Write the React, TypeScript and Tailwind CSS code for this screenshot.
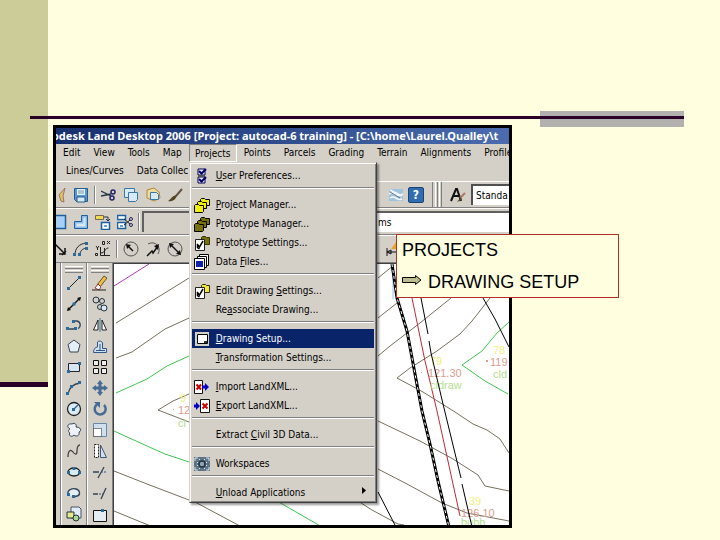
import type { ReactNode } from 'react';

interface MenuEntry {
  before?: string;
  accel: string;
  after: string;
  icon?: ReactNode;
  active?: boolean;
  submenu?: boolean;
}

function Icon({ children }: { children: ReactNode }) {
  return (
    <svg viewBox="0 0 16 16" className="h-4 w-4 shrink-0" fill="none" aria-hidden="true">
      {children}
    </svg>
  );
}

function Folders({ fill }: { fill: string }) {
  return (
    <Icon>
      <g fill={fill} stroke="#000">
        <path d="M6.500 2.500l1-1h3l1 1h4v6h-9z" />
        <path d="M3.500 5.500l1-1h3l1 1h4v6h-9z" />
        <path d="M.5 8.500l1-1h3l1 1h4v6l-1 1h-8z" />
      </g>
    </Icon>
  );
}

function CheckFolder({ fill }: { fill: string }) {
  return (
    <Icon>
      <path d="M7.500 2.500l1-1h3l1 1h3v7h-8z" fill={fill} stroke="#333300" />
      <path d="M1.500 4.500h9v11h-9z" fill="#fff" stroke="#222" />
      <path d="M3 9l2.500 3L9 6M3.500 9.500v3l2 1.500" stroke="#000" strokeWidth="1.500" />
    </Icon>
  );
}

function LandXml({ out }: { out?: boolean }) {
  return (
    <Icon>
      <path d={out ? 'M6.500 1.500h9v13h-9z' : 'M.5 1.500h8v13h-8z'} fill="#fff" stroke="#111" />
      <path d={out ? 'M8.500 5.500l5 5m0-5l-5 5' : 'M2.500 5.500l4.500 5m0-5l-4.500 5'} stroke="#c00" strokeWidth="2" />
      <path d={out ? 'M0 6.500h2V4l4 4-4 4V9.500H0z' : 'M8 6.500h3V4l4 4-4 4V9.500H8z'} fill="#0000c8" />
    </Icon>
  );
}

const menuGroups: MenuEntry[][] = [
  [
    {
      accel: 'U',
      after: 'ser Preferences...',
      icon: (
        <Icon>
          <path d="M4 1h7v6H4zM4 9h7v6H4z" fill="#eef" stroke="#000050" />
          <path d="M4 8h7" stroke="#555" strokeWidth="2" />
          <path d="M5 3l2.500 2.500L12 1M5 11l2.500 2.500L12 9" stroke="#000060" strokeWidth="2" />
        </Icon>
      ),
    },
  ],
  [
    { accel: 'P', after: 'roject Manager...', icon: <Folders fill="#f4ee10" /> },
    { before: 'P', accel: 'r', after: 'ototype Manager...', icon: <Folders fill="#77700c" /> },
    { before: 'Pr', accel: 'o', after: 'totype Settings...', icon: <CheckFolder fill="#77700c" /> },
    {
      before: 'Data ',
      accel: 'F',
      after: 'iles...',
      icon: (
        <Icon>
          <path d="M5.500.5h9v11h-9z" fill="#fff" stroke="#000" />
          <path d="M3.500 2.500h9v11h-9z" fill="#fff" stroke="#000" />
          <path d="M.5 4.500h10v11H.5z" fill="#fff" stroke="#000" />
          <path d="M2 7h7v6H2z" fill="#1020b0" />
        </Icon>
      ),
    },
  ],
  [
    { before: 'Edit Drawing ', accel: 'S', after: 'ettings...', icon: <CheckFolder fill="#f4e640" /> },
    { before: 'Re', accel: 'a', after: 'ssociate Drawing...' },
  ],
  [
    {
      accel: 'D',
      after: 'rawing Setup...',
      active: true,
      icon: (
        <Icon>
          <path d="M1 1h14v14H1z" fill="#d4d0c8" />
          <path d="M3.500 3.500h10v9h-10z" fill="#fff" stroke="#000" />
          <path d="M10 12v-2h3v2z" fill="#333" />
        </Icon>
      ),
    },
    { accel: 'T', after: 'ransformation Settings...' },
  ],
  [
    { accel: 'I', after: 'mport LandXML...', icon: <LandXml /> },
    { accel: 'E', after: 'xport LandXML...', icon: <LandXml out /> },
  ],
  [{ before: 'Extract ', accel: 'C', after: 'ivil 3D Data...' }],
  [
    {
      accel: '',
      after: 'Workspaces',
      icon: (
        <Icon>
          <path d="M0 1h16v14H0z" fill="#5c7488" />
          <circle cx="8" cy="8" r="3" fill="#8fa5b5" stroke="#26323c" strokeWidth="1.500" />
          <path d="M1 5V2h3M12 2h3v3M1 11v3h3M12 14h3v-3M5 3l1 1M11 3l-1 1M3 6l1 1M13 6l-1 1M5 13l1-1M11 13l-1-1M3 10l1-1M13 10l-1-1" stroke="#dfe7ec" />
        </Icon>
      ),
    },
  ],
  [{ accel: 'U', after: 'nload Applications', submenu: true }],
];

const menusBefore = ['Edit', 'View', 'Tools', 'Map'];
const menusAfter = ['Points', 'Parcels', 'Grading', 'Terrain', 'Alignments', 'Profile'];

const BLUE = '#2c6c9c';

const drawTools: [string, ReactNode][] = [
  ['Line', <><path d="M3 13L13 3" stroke="#222" /><path d="M1 12h3v3H1zM12 1h3v3h-3z" fill={BLUE} /></>],
  ['Construction line', <><path d="M2 14L14 2" stroke="#111" strokeWidth="1.500" /><path d="M1 15l1-4 3 3zM15 1l-4 1 3 3z" fill="#111" /><path d="M6.500 6.500h3v3h-3z" fill={BLUE} /></>],
  ['Polyline', <><path d="M2 12h8M7 4h4a4 4 0 011 7.500" stroke="#345" strokeWidth="1.300" /><path d="M0 10h3v3H0zM8 10h3v3H8zM6 3h3v3H6z" fill={BLUE} /></>],
  ['Polygon', <path d="M8 2l6 4.500-2 7.500H4L2 6.500z" fill="#e4eef6" stroke="#345" />],
  ['Rectangle', <><path d="M2.500 4.500h11v8h-11z" fill="#d8e6f4" stroke="#223" /><path d="M1 11h3v3H1zM12 3h3v3h-3z" fill={BLUE} /></>],
  ['Arc', <><path d="M2 14C3 8 7 4 14 3" stroke="#345" strokeWidth="1.300" /><path d="M0 12h3v3H0zM4 5h3v3H4zM12 1h3v3h-3z" fill={BLUE} /></>],
  ['Circle', <><circle cx="8" cy="8" r="6.500" fill="#dcecf6" stroke="#222" strokeWidth="1.300" /><path d="M7 9l5-5" stroke={BLUE} strokeWidth="1.500" /><path d="M6 7h3v3H6z" fill={BLUE} /></>],
  ['Revision cloud', <path d="M4 7C0 5 2 1 6 2c3-2 5 1 4 3 5 0 6 4 3 5 1 4-3 5-5 3-3 3-6 0-4-2-2-1-2-3 0-4z" fill="#eef2f6" stroke="#345" />],
  ['Spline', <path d="M2 14c0-7 3-8 5-5s4 3 4-1 1-6 3-6" stroke="#444" strokeWidth="1.300" />],
  ['Ellipse', <><ellipse cx="8" cy="8" rx="6" ry="4" fill="#d8ecf4" stroke="#222" strokeWidth="1.300" /><path d="M1 7h3v3H1zM12 7h3v3h-3zM6.500 3h3v3h-3z" fill={BLUE} /></>],
  ['Ellipse arc', <><path d="M2 9c-1-4 4-6 8-5s5 6 1 7l-4 1" fill="#e4eef4" stroke="#345" strokeWidth="1.300" /><path d="M1 8h3v3H1zM6 10h3v3H6z" fill={BLUE} /></>],
  ['Insert block', <><path d="M5 1h8l2 2v9H5z" fill="#e0ecf8" stroke="#456" /><path d="M1 6h7v6H1z" fill="#e4e890" stroke="#233" /><circle cx="10" cy="12" r="3" fill="#a8d898" stroke="#233" /></>],
];

const modifyTools: [string, ReactNode][] = [
  ['Erase', <><path d="M5 10L12 1l3 2-7 9z" fill="#f0c040" stroke="#653" /><path d="M3 13l3-4 3 3-2 3z" fill="#fff" stroke="#a33" /><path d="M0 15h14" stroke="#222" /></>],
  ['Copy', <><circle cx="4" cy="4" r="3" stroke="#234" /><circle cx="10" cy="5" r="2.500" stroke="#234" /><circle cx="8" cy="11" r="2.500" stroke="#234" /><circle cx="12" cy="12" r="3" fill="#d8e8f4" stroke="#234" /></>],
  ['Mirror', <><path d="M6 3v10H1.500zM10 3v10h4.500z" fill="#fff" stroke="#222" /><path d="M8 1v14" stroke="#3478b0" /></>],
  ['Offset', <><path d="M1.500 14.500h13v-4h-4V5a3 3 0 00-5-1v5c-2 0-4 2-4 5.500z" fill="#cfe2f0" stroke="#358" /><path d="M4 12.500h9M8 12V6" stroke="#358" /></>],
  ['Array', <path d="M1.500 1.500h5v5h-5zM9.500 1.500h5v5h-5zM1.500 9.500h5v5h-5zM9.500 9.500h5v5h-5z" fill="#eee" stroke="#111" />],
  ['Move', <path d="M8 0l3 4H9.500v2.500H12V5l4 3-4 3V9.500H9.500V12H11l-3 4-3-4h1.500V9.500H4V11L0 8l4-3v1.500h2.500V4H5z" fill="#466c94" />],
  ['Rotate', <><path d="M5 3.500A5.500 5.500 0 1012 4" stroke="#466c94" strokeWidth="2.500" /><path d="M2 1h6v6z" fill="#466c94" /></>],
  ['Scale', <><path d="M1.500 1.500h13v13h-13z" fill="#cfe0f0" stroke="#68a" /><path d="M1.500 6.500h8v8h-8z" fill="#fff" stroke="#222" strokeDasharray="1 1" /></>],
  ['Stretch', <><path d="M2.500 1.500h4v13h-4z" fill="#fff" stroke="#222" strokeDasharray="2 1" /><path d="M8.500 2l6 12.500h-6z" fill="#cfe0f0" stroke="#457" /></>],
  ['Trim', <><path d="M1 8h6M12 3L6 14" stroke="#345" strokeWidth="1.300" /><path d="M9 8h6" stroke="#357" strokeDasharray="2 1" /></>],
  ['Extend', <><path d="M1 9h5M14 3L9 14" stroke="#345" strokeWidth="1.300" /><path d="M7 9h4" stroke="#357" strokeDasharray="2 1" /></>],
  ['Break', <><path d="M1.500 4.500h13v11h-13z" fill="#e4ecf4" stroke="#111" /><path d="M9 3h3v3H9z" fill={BLUE} /></>],
];

function ToolButton({ label, children }: { label: string; children: ReactNode }) {
  return (
    <button type="button" aria-label={label} className="flex h-5 w-[22px] shrink-0 items-center justify-center">
      <Icon>{children}</Icon>
    </button>
  );
}

function Divider() {
  return (
    <span className="flex h-[18px] w-[6px] shrink-0 justify-center">
      <span className="w-[2px] border-l border-[#808080] bg-white" />
    </span>
  );
}

function Palette({ tools }: { tools: [string, ReactNode][] }) {
  return (
    <div className="flex w-[26px] shrink-0 flex-col border-r border-l border-r-[#808080] border-l-white pt-[3px]">
      <Grip />
      <div className="grid flex-1 auto-rows-fr justify-center">
        {tools.map(([label, art]) => (
          <ToolButton key={label} label={label}>
            {art}
          </ToolButton>
        ))}
      </div>
    </div>
  );
}

function Grip() {
  return (
    <div className="mx-[3px] flex h-[7px] shrink-0 flex-col justify-between">
      <span className="h-[3px] border-t border-b border-t-white border-b-[#808080]" />
      <span className="h-[3px] border-t border-b border-t-white border-b-[#808080]" />
    </div>
  );
}

function ProjectsMenu() {
  return (
    <div
      role="menu"
      className="absolute top-full left-0 z-10 w-[188px] border border-[#d4d0c8] border-r-[#404040] border-b-[#404040] bg-[#d4d0c8] shadow-[inset_1px_1px_0_#fff,inset_-1px_-1px_0_#808080,2px_2px_2px_rgba(0,0,0,0.4)]"
    >
      <div className="px-[2px] pt-[3px]">
        {menuGroups.map((group, i) => (
          <div key={i}>
            {i > 0 && (
              <div className="h-[10px] pt-[2px]">
                <div className="h-[2px] border-t border-[#808080] bg-white" />
              </div>
            )}
            {group.map((item) => (
              <button
                key={item.after}
                type="button"
                role="menuitem"
                className={`flex h-[19px] w-full items-center gap-[6px] pl-[2px] text-left whitespace-nowrap ${
                  item.active ? 'bg-[#0a246a] text-white' : 'text-black'
                }`}
              >
                <span className="w-4 shrink-0">{item.icon}</span>
                <span className="flex-1">
                  {item.before}
                  <span className="underline">{item.accel}</span>
                  {item.after}
                </span>
                {item.submenu && (
                  <svg viewBox="0 0 4 7" className="mr-2 mb-1 h-[7px] w-1" aria-hidden="true">
                    <path d="M0 0l4 3.500L0 7z" />
                  </svg>
                )}
              </button>
            ))}
          </div>
        ))}
      </div>
    </div>
  );
}

function MenuBar() {
  return (
    <nav className="h-[37px] pl-px leading-[18px] whitespace-nowrap">
      <div className="flex h-[18px] gap-px">
        {menusBefore.map((name) => (
          <button key={name} type="button" className="shrink-0 px-[6px]">
            {name}
          </button>
        ))}
        <div className="relative w-[48px] shrink-0">
          <button
            type="button"
            aria-expanded="true"
            className="h-[18px] w-full border border-t-[#808080] border-r-white border-b-white border-l-[#808080]"
          >
            Projects
          </button>
          <ProjectsMenu />
        </div>
        {menusAfter.map((name) => (
          <button key={name} type="button" className="shrink-0 px-[6px]">
            {name}
          </button>
        ))}
      </div>
      <div className="flex h-[18px] gap-px pl-[3px]">
        <button type="button" className="shrink-0 px-[6px]">Lines/Curves</button>
        <button type="button" className="shrink-0 px-[6px]">Data Collec</button>
      </div>
    </nav>
  );
}

function Toolbars() {
  return (
    <div>
      <div className="flex h-[27px] items-center overflow-hidden border-t border-b border-t-white border-b-[#808080]">
        <div className="-ml-2 flex items-center">
          <ToolButton label="Plot">
            <path d="M14 1L8 8l2 6 3 1-1-6z" fill="#e8c060" stroke="#976" />
          </ToolButton>
          <ToolButton label="Save">
            <path d="M1.500 1.500h13v13h-11l-2-2z" fill="#5c94cc" stroke="#245c94" />
            <path d="M4 2h8v6H4z" fill="#e4f0fa" />
            <path d="M5 4h6M5 6h6" stroke="#79a" />
            <path d="M4 10h8v5H4z" fill="#dce8f0" stroke="#245c94" />
          </ToolButton>
          <Divider />
          <ToolButton label="Cut">
            <path d="M0 4l10 5M0 9l10-2" stroke="#234" strokeWidth="1.300" />
            <circle cx="12" cy="5" r="2" stroke="#226" strokeWidth="1.500" />
            <circle cx="11" cy="11" r="2" stroke="#226" strokeWidth="1.500" />
          </ToolButton>
          <ToolButton label="Copy clip">
            <path d="M1.500 1.500h10v9h-10z" fill="#d8eaf8" stroke="#3878a8" />
            <path d="M5.500 5.500h9v7l-2 2h-7z" fill="#d8eaf8" stroke="#3878a8" />
          </ToolButton>
          <ToolButton label="Paste">
            <path d="M2 3l7-2 5 4 1 6-6 3-7-3z" fill="#ecdca0" stroke="#b08830" />
            <path d="M5.500 5.500h6l2 2v5h-8z" fill="#d8eaf8" stroke="#3878a8" />
          </ToolButton>
          <ToolButton label="Match properties">
            <path d="M15 2L9 9" stroke="#654" strokeWidth="2" />
            <path d="M10 8c-4 0-6 4-9 6 4 1 8-1 9-6z" fill="#542" />
          </ToolButton>
        </div>
        <span className="flex-1" />
        <ToolButton label="Sheet set">
          <path d="M1 2h14v12H1z" fill="#9fc4e0" />
          <path d="M1 7c5-4 6 5 14 0M2 11c5-4 7 4 12 1M2 3l12 6" stroke="#f4f8fa" strokeWidth="1.500" />
          <path d="M2 5l10 6" stroke="#678" />
        </ToolButton>
        <button
          type="button"
          className="mr-2 ml-px flex h-4 w-4 items-center justify-center rounded-xs border border-[#1c4474] bg-[#2f6db0] text-xs font-bold text-white"
        >
          ?
        </button>
        <span className="flex h-full w-[10px] shrink-0 justify-between border-l border-[#808080] pl-[2px]">
          <span className="w-[3px] border-r border-l border-r-[#808080] border-l-white" />
          <span className="w-[3px] border-r border-l border-r-[#808080] border-l-white" />
        </span>
        <span className="w-[5px]" />
        <ToolButton label="Text style">
          <path d="M1 14L6 2h1l4 12M3 9h6" stroke="#111" strokeWidth="2" />
          <path d="M15 6l-5 5" stroke="#a76" strokeWidth="2" />
          <path d="M11 10l-4 5 5-2z" fill="#542" />
        </ToolButton>
        <input
          aria-label="Style name"
          defaultValue="Standa"
          className="ml-[2px] h-[21px] w-[38px] shrink-0 border-t-2 border-l-2 border-[#505050] bg-white pl-[3px]"
        />
      </div>

      <div className="flex h-[27px] items-center overflow-hidden border-t border-b border-t-white border-b-[#808080]">
        <div className="-ml-2 flex items-center">
          <ToolButton label="Viewport">
            <path d="M1.500 1.500h13v13h-13z" fill="#a8d0f4" stroke="#1c60a0" strokeWidth="1.500" />
          </ToolButton>
          <ToolButton label="Polygonal viewport">
            <path d="M8.500 1.500h6v13h-13v-7h7z" fill="#8cbce8" stroke="#1c60a0" />
            <path d="M10.500 3.500h2v9h-9v-3h7z" fill="#d8eaf8" />
          </ToolButton>
          <ToolButton label="Convert viewport">
            <path d="M.5 1.500h8v4h-8z" fill="#f0dc50" stroke="#765" />
            <path d="M9 3h4v3M11 5l2 2 2-2" stroke="#234" />
            <path d="M6.500 8.500h8v7h-8z" fill="#fff" stroke="#1c60a0" strokeWidth="1.500" />
            <path d="M9 11h3v2H9z" fill="#68a0d0" />
          </ToolButton>
          <ToolButton label="Clip viewport">
            <path d="M.5 1.500h8v4h-8zM.5 8.500h8v6h-8z" fill="#fff" stroke="#1c60a0" strokeWidth="1.500" />
            <path d="M3 11h3v2H3z" fill="#68a0d0" />
            <path d="M7 5l6 5M7 11l6-5" stroke="#222" />
            <circle cx="14" cy="5" r="1.500" stroke="#226" />
            <circle cx="14" cy="11" r="1.500" stroke="#226" />
          </ToolButton>
          <Divider />
        </div>
        <input
          aria-label="Viewport scale"
          className="h-[21px] w-[60px] shrink-0 border-t-2 border-l-2 border-[#606060] bg-[#d4d0c8]"
        />
        <input
          aria-label="Layer"
          defaultValue="ms"
          className="ml-2 h-[21px] min-w-0 flex-1 border-t-2 border-l-2 border-[#606060] bg-white pl-[166px]"
        />
      </div>

      <div className="flex h-[27px] items-center overflow-hidden border-t border-white">
        <div className="-ml-2 flex items-center">
          <ToolButton label="Aligned dimension">
            <path d="M4 3l9 9M11 14l4-4M14 7v6H8" stroke="#111" strokeWidth="1.500" />
          </ToolButton>
          <ToolButton label="Arc length">
            <path d="M2 14C2 7 6 3 13 2M7 14c0-4 2-6 6-7" stroke="#222" />
            <path d="M0 12h3v3H0zM5 12h3v3H5zM12 1h3v3h-3zM12 6h3v3h-3z" fill={BLUE} />
          </ToolButton>
          <ToolButton label="Ordinate">
            <path d="M1 5l1.500 2L4 5M2.500 7v2M12 0l3 3m0-3l-3 3M7.500.5h2v3h-2zM.5 12.500h2v2h-2zM5.500 6v8.500H15M9.500 7v7M5.500 12c5 0 4-5 8-5" stroke="#222" />
          </ToolButton>
          <Divider />
          <ToolButton label="Radius">
            <circle cx="8" cy="8" r="7" stroke="#555" />
            <path d="M10 10L5 5" stroke="#111" strokeWidth="1.500" />
            <path d="M3 3l5 1-4 4z" fill="#111" />
          </ToolButton>
          <ToolButton label="Jogged">
            <path d="M3 3c7-4 14 3 10 10" stroke="#555" />
            <path d="M2 15l5-5 1 2 5-7" stroke="#111" strokeWidth="1.500" />
            <path d="M14 3l-1 6-4-4z" fill="#111" />
          </ToolButton>
          <ToolButton label="Diameter">
            <circle cx="8" cy="8" r="7" stroke="#555" />
            <path d="M4 4l8 8" stroke="#111" strokeWidth="1.500" />
            <path d="M2 2l5 1-4 4zM14 14l-5-1 4-4z" fill="#111" />
          </ToolButton>
        </div>
        <span className="flex-1" />
        <div className="mr-[105px]">
          <ToolButton label="Dimension edit">
            <path d="M2 7v8M2 11h12M2 11l4-2v4z" stroke="#111" />
            <path d="M6 8l5-7 4 7z" fill="#e8a030" />
          </ToolButton>
        </div>
      </div>
    </div>
  );
}

const contours = [
  '116,322 168,290 189,277',
  '116,357 132,351 165,328 189,317',
  '189,393 173,400 158,409 189,421',
  '114,470 147,483 189,499 195,501 240,525',
  '114,510 153,526',
  '358,500 372,509 398,523 404,524',
  '378,468 407,483 442,502 467,512 509,520',
  '378,420 420,440 453,458 478,474 485,485 509,490',
  '490,297 472,320 460,333 437,350 410,367 397,377 423,391 455,411 473,423 487,429 500,438 509,452',
  '378,355 390,345 420,322 451,297',
  '378,317 397,302',
  '378,277 394,264',
];

const greenLines = [
  '116,392 147,378 167,365 189,355',
  '114,430 147,445 165,453 189,461',
  '277,500 322,526',
  '509,321 497,332 482,350 462,364 485,380 508,393',
];

function DrawingCanvas() {
  return (
    <svg
      viewBox="114 263 395 262"
      preserveAspectRatio="xMinYMin slice"
      className="h-full min-w-0 flex-1 border-t border-l border-[#404040] bg-white"
      fill="none"
      role="img"
      aria-label="Survey drawing"
    >
      <g stroke="#77705c">
        {contours.map((points) => (
          <polyline key={points} points={points} />
        ))}
      </g>
      <g stroke="#3fc850">
        {greenLines.map((points) => (
          <polyline key={points} points={points} />
        ))}
      </g>
      <path d="M114 285L149 263" stroke="#b038b8" />
      <path d="M393 270v28" stroke="#90c8e8" />
      <path d="M412 297l13 63 12 50 23 105" stroke="#c02838" />
      <g className="font-['Liberation_Sans',sans-serif] text-[11px]">
        <g fill="#f0f080">
          <text x="430" y="364">79</text>
          <text x="493" y="353">78</text>
          <text x="469" y="504">39</text>
          <text x="180" y="401">9</text>
        </g>
        <g fill="#dc9c8c">
          <text x="428" y="376">121.30</text>
          <text x="490" y="365">119</text>
          <text x="461" y="516">126.10</text>
          <text x="178" y="413">12</text>
          <path d="M421 371h1v1h-1zM486 359h2v2h-2zM173 408h1v1h-1z" />
        </g>
        <g fill="#b4e090">
          <text x="430" y="388">cldraw</text>
          <text x="493" y="377">cld</text>
          <text x="461" y="525">bubb</text>
          <text x="178" y="426">cl</text>
        </g>
      </g>
      <g stroke="#000">
        <path d="M392 263l5 34 10 33 8 43 7 37 8 33 8 37 11 46" strokeWidth="3" />
        <path d="M392 263l5 34 10 33 8 43 7 37 8 33 8 37 11 46" stroke="#fff" strokeDasharray="3 3" />
        <path d="M421 297l7 36M429 340l2 12 12 51 18 74M462 483l10 43" />
        <path d="M483 297l12 21 14 28M378 491l18 35" />
      </g>
    </svg>
  );
}

function CadWindow() {
  return (
    <section className="min-w-0 flex-1 overflow-hidden border-[3px] border-black bg-[#d4d0c8] font-['DejaVu_Sans_Condensed','DejaVu_Sans',sans-serif] text-[10px] text-black">
      <h1 className="h-4 overflow-hidden bg-linear-to-r from-[#17306f] to-[#4a6cae] -indent-1 font-['Noto_Sans',sans-serif] text-[11px] leading-4 font-bold whitespace-nowrap text-white">
        odesk Land Desktop 2006 [Project: autocad-6 training] - [C:\home\Laurel.Qualley\t
      </h1>
      <MenuBar />
      <Toolbars />
      <div className="flex h-[263px] overflow-hidden border-t border-[#808080]">
        <div className="w-[5px] shrink-0 border-r border-[#808080]" />
        <Palette tools={drawTools} />
        <Palette tools={modifyTools} />
        <DrawingCanvas />
      </div>
    </section>
  );
}

export default function App() {
  return (
    <div className="flex min-h-screen overflow-hidden bg-[#ffffe0]">
      <aside className="w-12 shrink-0">
        <div className="h-[382px] bg-[#cccc99]" />
        <div className="h-[5px] bg-[#2b0028]" />
      </aside>
      <main className="min-w-0 flex-1 pt-[111px] pr-9">
        <div className="relative -ml-[18px] flex h-4 justify-end">
          <div className="w-36 bg-[#b3b0b0]" />
          <hr className="absolute inset-x-0 top-[5px] h-[3px] border-0 bg-[#2b0028]" />
        </div>
        <div className="relative -mt-[2px] flex pr-[172px] pl-[5px]">
          <CadWindow />
          <div className="absolute top-[109px] right-[65px] z-20 w-[223px] border border-[#b03028] bg-[#ffffe0] px-[5px] font-['Liberation_Sans',sans-serif] text-lg leading-[30px] text-black">
            <p>PROJECTS</p>
            <p className="flex items-center gap-[6px] pt-[2px]">
              <svg viewBox="0 0 20 10" className="mb-1 h-[10px] w-5" aria-hidden="true">
                <path d="M.5 2.500h13v-2L19 5l-5.500 4.500v-2H.5z" fill="#bcbc90" stroke="#000" />
              </svg>
              DRAWING SETUP
            </p>
          </div>
        </div>
      </main>
    </div>
  );
}
